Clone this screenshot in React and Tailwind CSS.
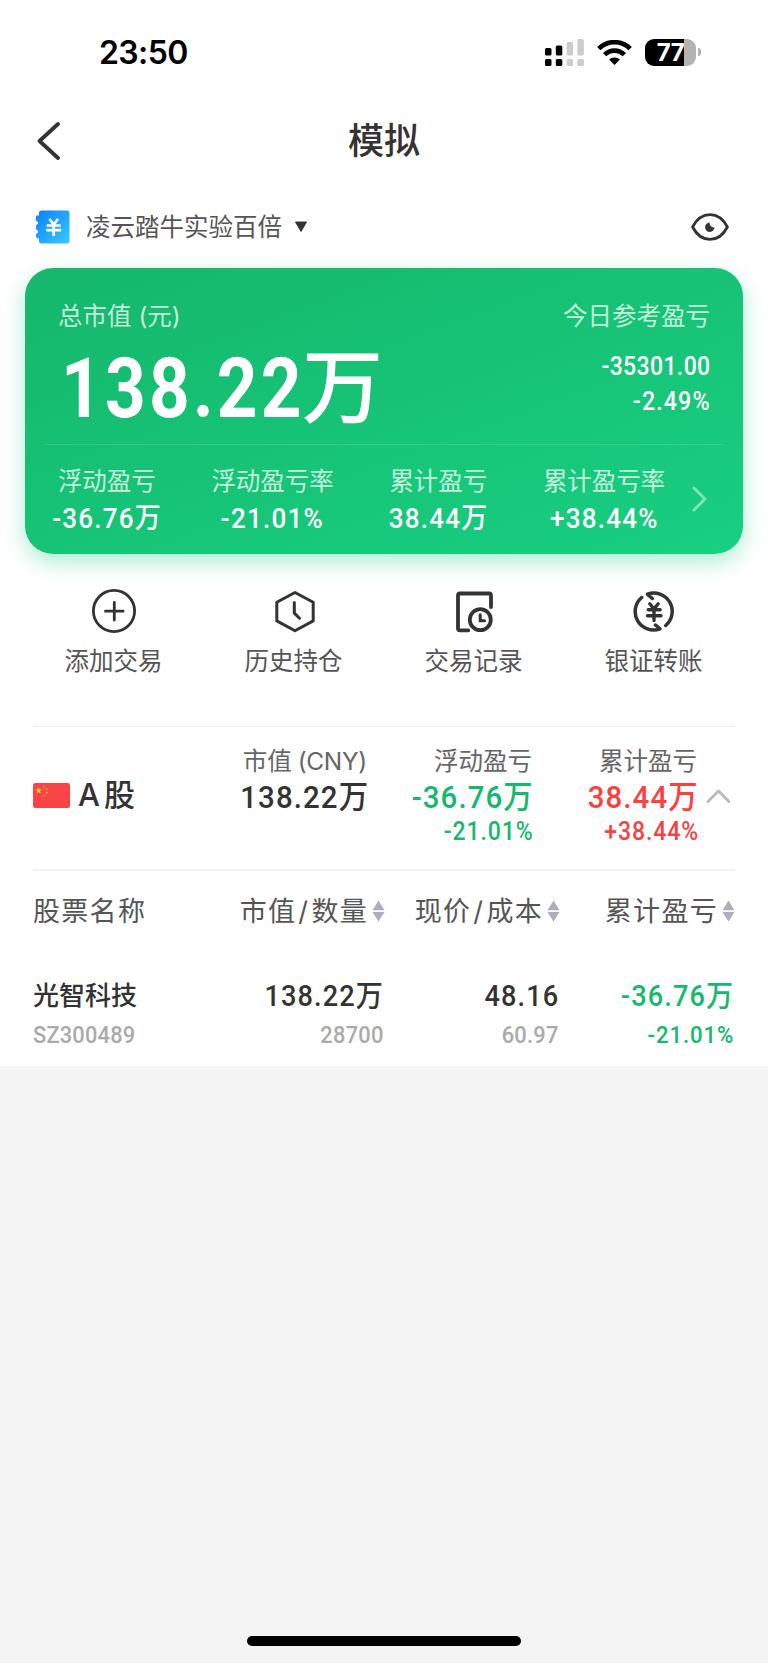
import clsx from "clsx";

const stats = [
  { label: "浮动盈亏", value: "-36.76万" },
  { label: "浮动盈亏率", value: "-21.01%" },
  { label: "累计盈亏", value: "38.44万" },
  { label: "累计盈亏率", value: "+38.44%" },
];

const SignalIcon = () => (
  <svg className="h-[27px] w-[39px]" viewBox="0 0 39 27">
    <g fill="#000">
      <rect x="0" y="9" width="6.5" height="7.5" rx="1.6" />
      <rect x="0" y="20" width="6.5" height="7" rx="1.6" />
      <rect x="10.8" y="6.5" width="6.5" height="10" rx="1.6" />
      <rect x="10.8" y="20" width="6.5" height="7" rx="1.6" />
    </g>
    <g fill="#ccc">
      <rect x="21.6" y="3" width="6.5" height="13.5" rx="1.6" />
      <rect x="21.6" y="20" width="6.5" height="7" rx="1.6" />
      <rect x="32.4" y="0" width="6.5" height="16.5" rx="1.6" />
      <rect x="32.4" y="20" width="6.5" height="7" rx="1.6" />
    </g>
  </svg>
);

const WifiIcon = () => (
  <svg className="h-[25px] w-[35px]" viewBox="0 0 35 25" fill="none" stroke="#000">
    <path d="M1.8 8.6a22.5 22.5 0 0 1 31.4 0" strokeWidth="4.8" />
    <path d="M7.6 14.6a14.2 14.2 0 0 1 19.8 0" strokeWidth="4.6" />
    <path d="M17.5 25l-5.4-5.4a7.8 7.8 0 0 1 10.8 0z" fill="#000" stroke="none" />
  </svg>
);

const EyeIcon = () => (
  <svg className="h-[28px] w-[38px]" viewBox="0 0 38 28">
    <path
      d="M1.6 14C5.5 6.5 11.5 1.6 19 1.6S32.5 6.5 36.4 14C32.5 21.5 26.5 26.4 19 26.4S5.5 21.5 1.6 14z"
      fill="none"
      stroke="#333"
      strokeWidth="2.8"
      strokeLinejoin="round"
    />
    <path d="M18.6 9.6a4.7 4.7 0 1 0 4.9 4.7c-2.9.6-5-1.4-4.9-4.7z" fill="#333" />
  </svg>
);

const AccountIcon = () => (
  <svg className="h-[34px] w-[34px]" viewBox="0 0 34 34">
    <defs>
      <linearGradient id="account" x1="0" y1="0" x2="1" y2="1">
        <stop offset="0" stopColor="#0f7dff" />
        <stop offset="1" stopColor="#36cbff" />
      </linearGradient>
    </defs>
    <path
      d="M5.5.5H31A2.5 2.5 0 0 1 33.5 3v28a2.5 2.5 0 0 1-2.5 2.5H5.5A2.5 2.5 0 0 1 3 31v-2.5a2.9 2.9 0 0 1-2-5.2 1.8 1.8 0 0 0 0-3.3 3.3 3.3 0 0 1 0-5.5 1.8 1.8 0 0 0 0-3.3A2.9 2.9 0 0 1 3 5.5V3A2.5 2.5 0 0 1 5.5.5z"
      fill="url(#account)"
    />
    <path
      d="M13.5 9l4.2 5.5L22 9M10.7 15.5h14M10.2 20.2h15M17.7 14.5V26"
      fill="none"
      stroke="#fff"
      strokeWidth="2.7"
    />
  </svg>
);

const AddIcon = () => (
  <svg className="h-11 w-11" viewBox="0 0 44 44" fill="none" stroke="#333" strokeWidth="2.8" strokeLinecap="round">
    <circle cx="22" cy="22" r="20.6" />
    <path d="M22.3 13.4v17.6M13.5 22.2h17.6" />
  </svg>
);

const HistoryIcon = () => (
  <svg
    className="h-11 w-11"
    viewBox="0 0 44 44"
    fill="none"
    stroke="#333"
    strokeWidth="3"
    strokeLinecap="round"
    strokeLinejoin="round"
  >
    <path d="M23 3.5l18.2 9.800v18.600L23 41.700 4.800 31.900V13.300z" />
    <path d="M22.3 13.500v10.600l5.200 5.200" />
  </svg>
);

const RecordIcon = () => (
  <svg
    className="h-11 w-11"
    viewBox="0 0 44 44"
    fill="none"
    stroke="#333"
    strokeWidth="3.8"
    strokeLinecap="round"
    strokeLinejoin="round"
  >
    <path d="M39 18V6.500a2 2 0 0 0-2-2H8a2 2 0 0 0-2 2v32.800a2 2 0 0 0 2 2h8.300" />
    <circle cx="28.3" cy="30.7" r="10.5" />
    <path d="M28.2 25.800v6h4.300" strokeWidth="3" strokeLinejoin="miter" />
  </svg>
);

const TransferIcon = () => (
  <svg
    className="h-11 w-11"
    viewBox="0 0 44 44"
    fill="none"
    stroke="#333"
    strokeWidth="3.5"
    strokeLinecap="round"
    strokeLinejoin="round"
  >
    <path d="M9.7 8.500A18.400 18.400 0 0 0 28 39.800l-4.500-3.800" />
    <path d="M33.7 36.500A18.400 18.400 0 0 0 15.400 5.200l4.900 4.300" />
    <path d="M17.8 14.800l4.200 5.200 4.200-5.200M16.200 20.700h12M15.500 26.700h13.500M22 20v11.500" strokeWidth="3.4" />
  </svg>
);

const ChinaFlag = () => (
  <svg className="h-[25px] w-[37px]" viewBox="0 0 37 25">
    <rect width="37" height="25" rx="2.5" fill="#f94346" />
    <path d="M5.700 4.300l.8 2.300h2.400L7 8l.7 2.400-2-1.400-2 1.400.7-2.400-1.900-1.400h2.400z" fill="#ffee0a" />
    <g fill="#ffc814">
      <circle cx="11.3" cy="4" r=".9" />
      <circle cx="13.7" cy="6.3" r=".9" />
      <circle cx="13.7" cy="9.7" r=".9" />
      <circle cx="11.3" cy="12.6" r=".9" />
    </g>
  </svg>
);

const SortIcon = () => (
  <svg className="ml-1 h-[22px] w-[13px]" viewBox="0 0 12 22" fill="#adaebc">
    <path d="M6 .5L12 10.200H0zM6 21.500L12 12H0z" />
  </svg>
);

const actions = [
  { label: "添加交易", icon: <AddIcon /> },
  { label: "历史持仓", icon: <HistoryIcon /> },
  { label: "交易记录", icon: <RecordIcon /> },
  { label: "银证转账", icon: <TransferIcon /> },
];

// digits are set in a slightly narrowed Roboto
const Num = ({ className, children }) => (
  <span className={clsx("inline-block whitespace-nowrap font-['Roboto','Noto_Sans_CJK_SC',sans-serif]", className)}>
    {children}
  </span>
);

const MarketColumn = ({ label, value, percent, color }) => (
  <div className="flex w-[165px] shrink-0 flex-col items-end">
    <span className="whitespace-nowrap text-[24.5px] leading-[34px] text-[#666]">{label}</span>
    <Num
      className={clsx(
        "-mr-[2px] mt-[1px] origin-right scale-x-[0.92] text-[32px] font-medium leading-9 tracking-[1.2px]",
        color
      )}
    >
      {value}
    </Num>
    {percent && (
      <Num
        className={clsx(
          "-mr-[2px] origin-right scale-x-[0.92] text-[25px] font-medium leading-[34px] tracking-[1px]",
          color
        )}
      >
        {percent}
      </Num>
    )}
  </div>
);

const HeaderCell = ({ children }) => (
  <div className="flex w-[175px] shrink-0 items-center justify-end">
    <span className="whitespace-nowrap pt-[2px] tracking-[1.3px]">{children}</span>
    <SortIcon />
  </div>
);

const Slash = () => <span className="px-[2px]">/</span>;

const HoldingCell = ({ value, sub, color = "text-[#333]", subClass = "scale-x-[0.91] tracking-[0.3px] text-[#aaa]" }) => (
  <div className="flex w-[175px] flex-col items-end pr-px">
    <Num
      className={clsx("origin-right scale-x-[0.92] text-[29.5px] font-medium leading-10 tracking-[1.2px]", color)}
    >
      {value}
    </Num>
    <Num className={clsx("origin-right text-[24px] font-medium leading-[38px]", subClass)}>{sub}</Num>
  </div>
);

const App = () => {
  return (
    <div className="flex h-[1663px] w-[768px] flex-col overflow-hidden bg-[#f4f4f4] font-['Inter','Noto_Sans_CJK_SC',sans-serif] text-[#333]">
      <div className="h-[1066px] bg-white">
        {/* status bar */}
        <div className="flex h-[104px] items-center justify-between pl-[99px] pr-[67px]">
          <span className="pt-[2px] text-[32px] font-semibold tracking-[-0.6px] text-black">23:50</span>
          <div className="flex items-center">
            <SignalIcon />
            <div className="ml-[13px]">
              <WifiIcon />
            </div>
            <div className="ml-[13px] flex h-[27px] w-[51px] items-center justify-center rounded-[9px] bg-linear-to-r from-black from-[77%] to-[#b3b3b3] to-[77%] pt-px text-[24px] font-bold leading-none tracking-[-0.5px] text-white">
              77
            </div>
            <div className="ml-[2px] h-2 w-[3px] rounded-r-full bg-[#b3b3b3]" />
          </div>
        </div>

        {/* title */}
        <div className="grid h-[74px] grid-cols-3 items-center px-9">
          <svg
            className="h-10 w-6"
            viewBox="0 0 24 40"
            fill="none"
            stroke="#333"
            strokeWidth="3.8"
            strokeLinecap="round"
            strokeLinejoin="round"
          >
            <path d="M22 3L3.5 20 22 37" />
          </svg>
          <h1 className="text-center text-[36px] font-medium leading-10">模拟</h1>
        </div>

        {/* account */}
        <div className="flex h-[90px] items-center pl-9 pr-[39px] pt-[7px]">
          <AccountIcon />
          <span className="ml-4 pt-[2px] text-[24.5px] text-[#555]">凌云踏牛实验百倍</span>
          <svg className="ml-3 mt-[1px] h-3 w-[14px]" viewBox="0 0 14 12">
            <path d="M1.5 1h11L7 10.5z" fill="#333" stroke="#333" strokeLinejoin="round" />
          </svg>
          <div className="ml-auto">
            <EyeIcon />
          </div>
        </div>

        {/* summary card */}
        <div className="mx-[25px] h-[286px] rounded-[28px] bg-linear-[160deg] from-[#15b76b] to-[#18cf82] text-white shadow-[0_8px_22px_rgba(24,204,128,0.36)]">
          <div className="flex h-44 justify-between pl-[33px] pr-[33px] pt-7">
            <div>
              <div className="text-[24.5px] leading-10 text-white/75">总市值 (元)</div>
              <div className="mt-[3px] flex">
                <Num className="ml-[3px] -mr-[44px] origin-left scale-x-[0.855] text-[83px] font-bold leading-[100px] tracking-[3.8px]">
                  138.22
                </Num>
                <Num className="text-[81px] font-medium leading-[100px]">万</Num>
              </div>
            </div>
            <div className="flex flex-col items-end">
              <div className="text-[24.5px] leading-10 text-white/75">今日参考盈亏</div>
              <Num className="-mr-[1px] mt-[13px] origin-right scale-x-[0.92] text-[25px] font-medium leading-[35px] tracking-[0.4px]">
                -35301.00
              </Num>
              <Num className="-mr-[1px] origin-right scale-x-[0.93] text-[25px] font-medium leading-[35px] tracking-[1.2px]">
                -2.49%
              </Num>
            </div>
          </div>
          <div className="mx-5 h-px bg-white/12" />
          <div className="flex pt-4">
            <div className="-ml-px grid w-[663px] grid-cols-4">
              {stats.map((item) => (
                <div key={item.label} className="flex flex-col items-center">
                  <span className="text-[24.5px] leading-10 text-white/75">{item.label}</span>
                  <Num className="scale-x-[0.93] text-[28px] font-medium leading-9 tracking-[1.3px]">
                    {item.value}
                  </Num>
                </div>
              ))}
            </div>
            <svg
              className="ml-1 mt-[25px] h-[26px] w-4"
              viewBox="0 0 16 26"
              fill="none"
              stroke="#fff"
              strokeOpacity=".45"
              strokeWidth="3"
              strokeLinecap="round"
            >
              <path d="M3 2l11 11L3 24" />
            </svg>
          </div>
        </div>

        {/* actions */}
        <div className="mx-6 grid h-[172px] grid-cols-4 pt-[35px]">
          {actions.map((item) => (
            <div key={item.label} className="flex flex-col items-center">
              {item.icon}
              <span className="-ml-px mt-2.5 text-[24.5px] leading-9 text-[#555]">{item.label}</span>
            </div>
          ))}
        </div>

        {/* market */}
        <div className="mx-[33px] flex h-[144px] border-t border-[#eee] pt-[17px]">
          <div className="mt-[35px] flex h-8 w-[169px] shrink-0 items-center">
            <ChinaFlag />
            <span className="ml-2 text-[31px] font-medium leading-8">
              <span className="mr-1">A</span>股
            </span>
          </div>
          <MarketColumn label={<>市值<span className="ml-1.5 tracking-[-0.3px]">(CNY)</span></>} value="138.22万" />
          <MarketColumn label="浮动盈亏" value="-36.76万" percent="-21.01%" color="text-[#14b96c]" />
          <MarketColumn label="累计盈亏" value="38.44万" percent="+38.44%" color="text-[#fb4040]" />
          <svg
            className="ml-[9px] mt-11 h-4 w-6 shrink-0"
            viewBox="0 0 24 16"
            fill="none"
            stroke="#bbb"
            strokeWidth="3"
            strokeLinecap="round"
            strokeLinejoin="round"
          >
            <path d="M2 13.5L12.500 3 23 13.500" />
          </svg>
        </div>

        {/* holdings */}
        <div className="mx-[33px] -mt-px border-t-2 border-[#f4f4f4]">
          <div className="flex h-20 items-center text-[27px] text-[#555]">
            <span className="w-[177px] pt-[2px] tracking-[1.3px]">股票名称</span>
            <HeaderCell>
              市值
              <Slash />
              数量
            </HeaderCell>
            <HeaderCell>
              现价
              <Slash />
              成本
            </HeaderCell>
            <HeaderCell>累计盈亏</HeaderCell>
          </div>
          <div className="flex pt-[25px]">
            <div className="flex w-[177px] flex-col">
              <span className="text-[26px] font-medium leading-10">光智科技</span>
              <Num className="origin-left scale-x-[0.91] text-[24px] font-medium leading-[38px] tracking-[0.2px] text-[#aaa]">
                SZ300489
              </Num>
            </div>
            <HoldingCell value="138.22万" sub="28700" />
            <HoldingCell value="48.16" sub="60.97" />
            <HoldingCell
              value="-36.76万"
              sub="-21.01%"
              color="text-[#14b96c]"
              subClass="scale-x-[0.92] tracking-[1px] text-[#14b96c]"
            />
          </div>
        </div>
      </div>

      {/* home indicator */}
      <div className="mt-auto mb-[17px] ml-[247px] h-2.5 w-[274px] rounded-full bg-black" />
    </div>
  );
};

export default App;
